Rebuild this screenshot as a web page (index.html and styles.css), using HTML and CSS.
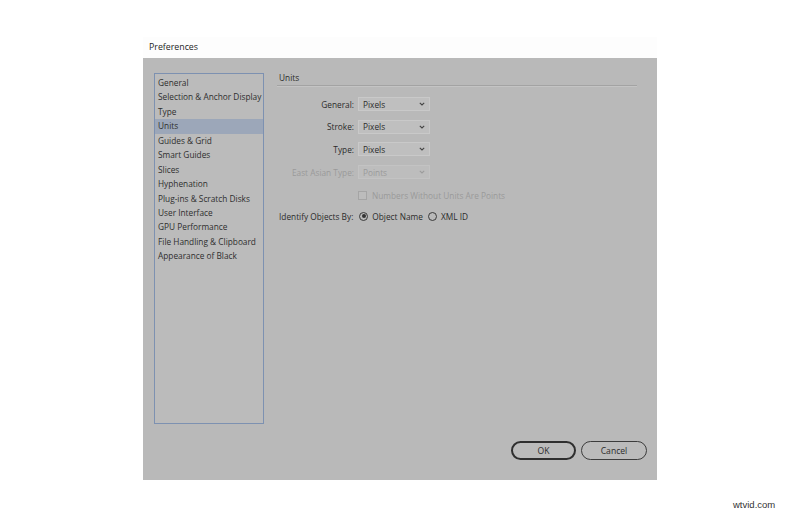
FILE: index.html
```html
<!DOCTYPE html>
<html>
<head>
<meta charset="utf-8">
<link rel="stylesheet" href="styles.css">
</head>
<body>
<div class="dialog">
  <div class="titlebar">Preferences</div>
  <div class="body">
    <div class="main">
      <ul class="list">
        <li>General</li>
        <li>Selection &amp; Anchor Display</li>
        <li>Type</li>
        <li class="sel">Units</li>
        <li>Guides &amp; Grid</li>
        <li>Smart Guides</li>
        <li>Slices</li>
        <li>Hyphenation</li>
        <li>Plug-ins &amp; Scratch Disks</li>
        <li>User Interface</li>
        <li>GPU Performance</li>
        <li>File Handling &amp; Clipboard</li>
        <li>Appearance of Black</li>
      </ul>
      <div class="panel">
        <div class="heading">Units</div>
        <div class="rows">
          <div class="row"><span class="label">General:</span><span class="select">Pixels<svg class="chev" width="6" height="4" viewBox="0 0 6 4"><path d="M0.8 0.8 L3 3 L5.2 0.8" fill="none" stroke="#444" stroke-width="1.1"/></svg></span></div>
          <div class="row"><span class="label">Stroke:</span><span class="select">Pixels<svg class="chev" width="6" height="4" viewBox="0 0 6 4"><path d="M0.8 0.8 L3 3 L5.2 0.8" fill="none" stroke="#444" stroke-width="1.1"/></svg></span></div>
          <div class="row"><span class="label">Type:</span><span class="select">Pixels<svg class="chev" width="6" height="4" viewBox="0 0 6 4"><path d="M0.8 0.8 L3 3 L5.2 0.8" fill="none" stroke="#444" stroke-width="1.1"/></svg></span></div>
          <div class="row disabled"><span class="label">East Asian Type:</span><span class="select">Points<svg class="chev" width="6" height="4" viewBox="0 0 6 4"><path d="M0.8 0.8 L3 3 L5.2 0.8" fill="none" stroke="#9c9c9c" stroke-width="1.1"/></svg></span></div>
          <div class="row check disabled"><span class="label"></span><span class="box"></span><span>Numbers Without Units Are Points</span></div>
        </div>
        <div class="identify">
          <span class="idlabel">Identify Objects By:</span>
          <span class="radio on"></span><span class="rtext">Object Name</span>
          <span class="radio"></span><span class="rtext">XML ID</span>
        </div>
      </div>
    </div>
    <div class="footer">
      <button class="btn primary">OK</button>
      <button class="btn">Cancel</button>
    </div>
  </div>
</div>
<div class="watermark">wtvid.com</div>
</body>
</html>
```
FILE: styles.css
```css
* { box-sizing: border-box; }
html, body { margin: 0; padding: 0; }
body {
  background: #ffffff;
  width: 800px;
  height: 517px;
  overflow: hidden;
  font-family: "Open Sans", "Noto Sans", sans-serif;
  font-size: 8.3px;
  color: #2b2b2b;
  padding: 37px 0 0 143px;
  position: relative;
}
.dialog { width: 514px; }
.titlebar {
  height: 21px;
  background: #fdfdfd;
  padding: 4px 0 0 6px;
  font-size: 8.8px;
  color: #1e1e1e;
}
.body {
  height: 422px;
  background: #b9b9b9;
  padding: 15px 10px 0 11px;
  display: flex;
  flex-direction: column;
}
.main {
  display: grid;
  grid-template-columns: 110px 360px;
  column-gap: 13px;
}
.list {
  list-style: none;
  margin: 0;
  padding: 2px 0 0 0;
  height: 351px;
  border: 1px solid #7d91b1;
  background: #bbbbbb;
}
.list li {
  height: 14.45px;
  line-height: 14.45px;
  padding-left: 3px;
  white-space: nowrap;
  color: #2e2e2e;
}
.list li.sel { background: #9ca7b9; }
.panel { display: flex; flex-direction: column; }
.heading {
  height: 13px;
  padding-left: 2px;
  line-height: 10px;
  border-bottom: 1px solid #a3a3a3;
  box-shadow: 0 1px 0 #c4c4c4;
}
.rows {
  margin-top: 11px;
  display: flex;
  flex-direction: column;
  gap: 8.7px;
}
.row {
  display: flex;
  align-items: center;
  height: 14px;
}
.label {
  width: 78px;
  text-align: right;
  padding-right: 1px;
  margin-right: 3px;
  flex: none;
}
.select {
  width: 72px;
  height: 14px;
  background: #bfbfbf;
  border: 1px solid #c9c9c9;
  display: flex;
  align-items: center;
  padding-left: 4px;
  position: relative;
}
.chev { position: absolute; right: 4px; top: 4px; }
.disabled { color: #9a9a9a; }
.disabled .select { background: #bdbdbd; border-color: #c3c3c3; }
.check { margin-top: 1px; }
.box {
  width: 9px;
  height: 9px;
  border: 1px solid #a5a5a5;
  margin-right: 5px;
  background: #bcbcbc;
}
.identify {
  margin-top: 7px;
  display: flex;
  align-items: center;
  height: 14px;
  padding-left: 2px;
}
.idlabel { margin-right: 3px; }
.radio {
  width: 9px;
  height: 9px;
  border-radius: 50%;
  border: 1.3px solid #3a3a3a;
  margin: 0 4px 0 3px;
  position: relative;
}
.radio.on::after {
  content: "";
  position: absolute;
  left: 1.2px; top: 1.2px;
  width: 4px; height: 4px;
  border-radius: 50%;
  background: #333;
}
.rtext { margin-right: 2px; }
.footer {
  margin-top: 17px;
  display: flex;
  justify-content: flex-end;
  gap: 5px;
}
.btn {
  font-family: inherit;
  font-size: 8.6px;
  color: #2b2b2b;
  height: 19px;
  width: 65px;
  border-radius: 10px;
  border: 1px solid #3c3c3c;
  background: #bbbbbb;
  padding: 0;
}
.btn.primary { border: 2px solid #2f2f2f; }
.btn + .btn { width: 66px; }
.watermark {
  position: absolute;
  left: 733px;
  top: 499px;
  font-family: "Liberation Sans", Arial, sans-serif;
  font-size: 9.5px;
  color: #333;
}
```
